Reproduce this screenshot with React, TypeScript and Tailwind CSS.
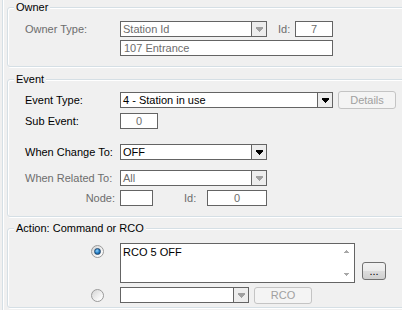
import React from "react";

function Arrow({ color }: { color: string }) {
  return (
    <svg width="7" height="5" viewBox="0 0 7 5" shapeRendering="crispEdges">
      <path d="M0 0h7v2h-1v1h-1v1h-1v1h-1v-1h-1v-1h-1v-1h-1z" fill={color} />
    </svg>
  );
}

function SmallTri({ up }: { up?: boolean }) {
  return (
    <svg width="5" height="3" viewBox="0 0 5 3" shapeRendering="crispEdges">
      {up ? (
        <path d="M2 0h1v1h1v1h1v1h-5v-1h1v-1h1z" fill="#a8a8a8" />
      ) : (
        <path d="M0 0h5v1h-1v1h-1v1h-1v-1h-1v-1h-1z" fill="#a8a8a8" />
      )}
    </svg>
  );
}

function Combo({
  className,
  text,
  disabled,
}: {
  className: string;
  text: string;
  disabled?: boolean;
}) {
  return (
    <div
      className={
        "flex h-[16px] items-stretch border border-[#646464] bg-white " + className
      }
    >
      <div
        className={
          "flex-1 overflow-hidden whitespace-nowrap pl-[2px] leading-[14px] " +
          (disabled ? "text-[#6d6d6d]" : "text-black")
        }
      >
        {text}
      </div>
      <div className="flex w-[15px] items-center justify-center border-l border-[#646464] bg-[#ededed]">
        <Arrow color={disabled ? "#a0a0a0" : "#000000"} />
      </div>
    </div>
  );
}

function Box({
  className,
  text,
  center,
  disabled,
}: {
  className: string;
  text?: string;
  center?: boolean;
  disabled?: boolean;
}) {
  return (
    <div
      className={
        "h-[16px] overflow-hidden whitespace-nowrap border border-[#646464] bg-white leading-[14px] " +
        (center ? "text-center " : "pl-[3px] ") +
        (disabled ? "text-[#6d6d6d] " : "text-black ") +
        className
      }
    >
      {text}
    </div>
  );
}

function Radio({ checked }: { checked?: boolean }) {
  return (
    <div className="flex h-[13px] w-[13px] shrink-0 items-center justify-center rounded-full border border-[#9a9a9a] bg-[linear-gradient(135deg,#d4d4d4,#f7f7f7_70%,#ffffff)]">
      {checked && (
        <div className="h-[7px] w-[7px] rounded-full border border-[#21486e] bg-[radial-gradient(circle_at_40%_35%,#8fd4ff,#1f78c0_55%,#0d4478)]" />
      )}
    </div>
  );
}

function Group({
  label,
  className,
  children,
}: {
  label: string;
  className: string;
  children: React.ReactNode;
}) {
  return (
    <div
      className={
        "relative w-[420px] rounded-[3px] border border-[#d5dfe5] shadow-[inset_1px_1px_0_#ffffff,1px_1px_0_#ffffff] " +
        className
      }
    >
      <span className="absolute left-[6px] top-[-8px] bg-[#f0f0f0] px-[2px] leading-[14px] text-black">
        {label}
      </span>
      {children}
    </div>
  );
}

export default function App() {
  return (
    <div className="h-[310px] w-[402px] overflow-hidden bg-[#f0f0f0] pl-[2px] font-['Liberation_Sans',Arial,sans-serif] text-[11px] text-black">
      <div className="h-full border-l border-[#d5dfe5] pl-[4px] pt-[7px] shadow-[inset_1px_0_0_#ffffff]">
        {/* Owner */}
        <Group label="Owner" className="pb-[10px] pl-[17px] pt-[13px]">
          <div className="flex h-[16px] items-center">
            <div className="w-[95px] text-[#6d6d6d]">Owner Type:</div>
            <Combo className="w-[147px]" text="Station Id" disabled />
            <div className="ml-[11px] w-[17px] text-[#6d6d6d]">Id:</div>
            <Box className="w-[38px]" text="7" center disabled />
          </div>
          <div className="mt-[3px] flex h-[16px] items-center">
            <div className="w-[95px]" />
            <Box className="w-[213px]" text="107 Entrance" disabled />
          </div>
        </Group>

        {/* Event */}
        <Group label="Event" className="mt-[12px] pb-[10px] pl-[17px] pt-[12px]">
          <div className="flex h-[16px] items-center">
            <div className="w-[95px]">Event Type:</div>
            <Combo className="w-[213px]" text="4 - Station in use" />
            <div className="ml-[5px] flex h-[18px] w-[58px] items-center justify-center rounded-[3px] border border-[#c4c4c4] bg-[#f4f4f4] text-[#a0a0a0]">
              Details
            </div>
          </div>
          <div className="mt-[5px] flex h-[16px] items-center">
            <div className="w-[95px]">Sub Event:</div>
            <Box className="w-[38px]" text="0" center disabled />
          </div>
          <div className="mt-[15px] flex h-[16px] items-center">
            <div className="w-[95px]">When Change To:</div>
            <Combo className="w-[147px]" text="OFF" />
          </div>
          <div className="mt-[10px] flex h-[16px] items-center">
            <div className="w-[95px] text-[#6d6d6d]">When Related To:</div>
            <Combo className="w-[147px]" text="All" disabled />
          </div>
          <div className="mt-[4px] flex h-[16px] items-center">
            <div className="w-[95px] pr-[5px] text-right text-[#6d6d6d]">Node:</div>
            <Box className="w-[33px]" />
            <div className="ml-[31px] w-[23px] text-[#6d6d6d]">Id:</div>
            <Box className="w-[60px]" text="0" center disabled />
          </div>
        </Group>

        {/* Action */}
        <Group label="Action: Command or RCO" className="mt-[11px] pb-[4px] pl-[83px] pt-[14px]">
          <div className="flex items-start">
            <div className="mt-[2px]">
              <Radio checked />
            </div>
            <div className="ml-[16px] flex h-[40px] w-[235px] border border-[#646464] bg-white">
              <div className="flex-1 pl-[2px] pt-[1px] leading-[14px]">RCO 5 OFF</div>
              <div className="flex w-[16px] flex-col items-center justify-between py-[6px]">
                <SmallTri up />
                <SmallTri />
              </div>
            </div>
            <div className="ml-[7px] mt-[19px] flex h-[18px] w-[24px] items-center justify-center rounded-[3px] border border-[#707070] bg-[linear-gradient(#f2f2f2,#ebebeb_50%,#dddddd_50%,#cfcfcf)] leading-[10px]">
              ...
            </div>
          </div>
          <div className="mt-[4px] flex h-[16px] items-center">
            <Radio />
            <Combo className="ml-[16px] w-[129px]" text="" disabled />
            <div className="ml-[5px] flex h-[17px] w-[58px] items-center justify-center rounded-[3px] border border-[#c4c4c4] bg-[#f4f4f4] text-[#a0a0a0]">
              RCO
            </div>
          </div>
        </Group>
      </div>
    </div>
  );
}
